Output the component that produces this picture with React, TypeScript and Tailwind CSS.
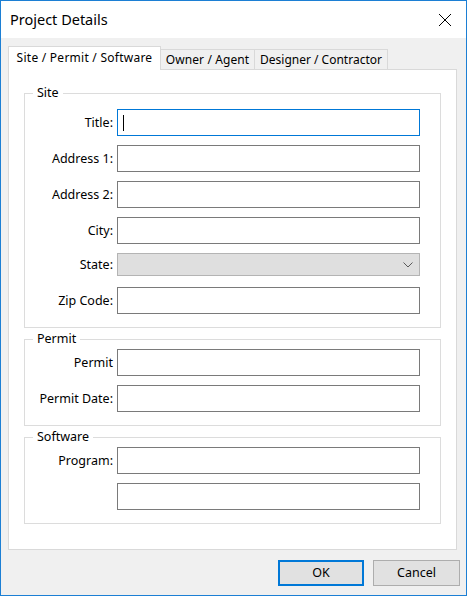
import React from "react";

type Row = { label: string; kind?: "input" | "select"; focused?: boolean };

const siteRows: Row[] = [
  { label: "Title:", focused: true },
  { label: "Address 1:" },
  { label: "Address 2:" },
  { label: "City:" },
  { label: "State:", kind: "select" },
  { label: "Zip Code:" },
];

const permitRows: Row[] = [{ label: "Permit" }, { label: "Permit Date:" }];

const softwareRows: Row[] = [{ label: "Program:" }, { label: "" }];

function Field({ row }: { row: Row }) {
  if (row.kind === "select") {
    return (
      <div className="mb-[2px] flex h-[23px] items-center">
        <div className="w-[89px] pr-[1px] pt-px text-right text-[12.5px] text-black">{row.label}</div>
        <div className="ml-[3px] flex h-[23px] w-[303px] items-center justify-end border border-[#b4b4b4] bg-[#dfdfdf] pr-[6px]">
          <svg width="10" height="6" viewBox="0 0 10 6">
            <path d="M0.5 0.5 L5 5 L9.5 0.5" fill="none" stroke="#5a5a5a" strokeWidth="1" />
          </svg>
        </div>
      </div>
    );
  }
  return (
    <div className="flex h-[27px] items-center">
      <div className="w-[89px] pr-[1px] pt-px text-right text-[12.5px] text-black">{row.label}</div>
      <div
        className={`ml-[3px] flex h-[27px] w-[303px] items-center bg-white pl-[5px] ${
          row.focused ? "border border-[#0078d7]" : "border border-[#7a7a7a]"
        }`}
      >
        {row.focused && <div className="h-[16px] w-px bg-black" />}
      </div>
    </div>
  );
}

function Group({
  title,
  rows,
  className,
  topPad,
}: {
  title: string;
  rows: Row[];
  className?: string;
  topPad: string;
}) {
  return (
    <fieldset className={`border border-[#dcdcdc] pb-[13px] ${className ?? ""}`}>
      <legend className="ml-[8px] px-[4px] text-[12.5px] leading-[16px] text-black">{title}</legend>
      <div className={`flex flex-col gap-[9px] ${topPad}`}>
        {rows.map((r, i) => (
          <Field key={i} row={r} />
        ))}
      </div>
    </fieldset>
  );
}

export default function App() {
  return (
    <div className="flex h-[596px] w-[467px] flex-col border border-[#1c7fd4] bg-[#f0f0f0] font-['Noto_Sans',sans-serif] text-black">
      {/* title bar */}
      <div className="flex h-[37px] items-center justify-between bg-white pl-[9px] pr-[14px]">
        <span className="text-[14.5px]">Project Details</span>
        <svg width="14" height="14" viewBox="0 0 14 14">
          <path d="M1 1 L13 13 M13 1 L1 13" stroke="#000" strokeWidth="1" />
        </svg>
      </div>

      <div className="flex flex-col pl-[7px] pr-[9px] pt-[8px]">
        {/* tabs */}
        <div className="flex h-[23px] items-end text-[12px]">
          <div className="relative z-10 -mb-px flex h-[24px] w-[153px] items-center justify-center border border-b-0 border-[#d9d9d9] bg-white pb-[2px] tracking-[0.25px]">
            Site / Permit / Software
          </div>
          <div className="flex h-[20px] w-[94px] items-center justify-center border border-b-0 border-l-0 border-[#d9d9d9] bg-[#f0f0f0] tracking-[0.1px]">
            Owner / Agent
          </div>
          <div className="flex h-[20px] w-[133px] items-center justify-center border border-b-0 border-l-0 border-[#d9d9d9] bg-[#f0f0f0]">
            Designer / Contractor
          </div>
        </div>

        {/* panel */}
        <div className="flex h-[481px] flex-col border border-[#d9d9d9] bg-white px-[15px] pt-[15px]">
          <Group title="Site" rows={siteRows} topPad="pt-[8px]" />
          <Group title="Permit" rows={permitRows} topPad="pt-[2px]" className="mt-[3px]" />
          <Group title="Software" rows={softwareRows} topPad="pt-[2px]" className="mt-[3px]" />
        </div>
      </div>

      {/* buttons */}
      <div className="mt-[10px] flex justify-end gap-[9px] pr-[6px] text-[12.5px]">
        <button className="h-[26px] w-[86px] border-2 border-[#0078d7] bg-[#e1e1e1] pt-px">OK</button>
        <button className="h-[26px] w-[87px] border border-[#adadad] bg-[#e1e1e1] pt-px">Cancel</button>
      </div>
    </div>
  );
}
